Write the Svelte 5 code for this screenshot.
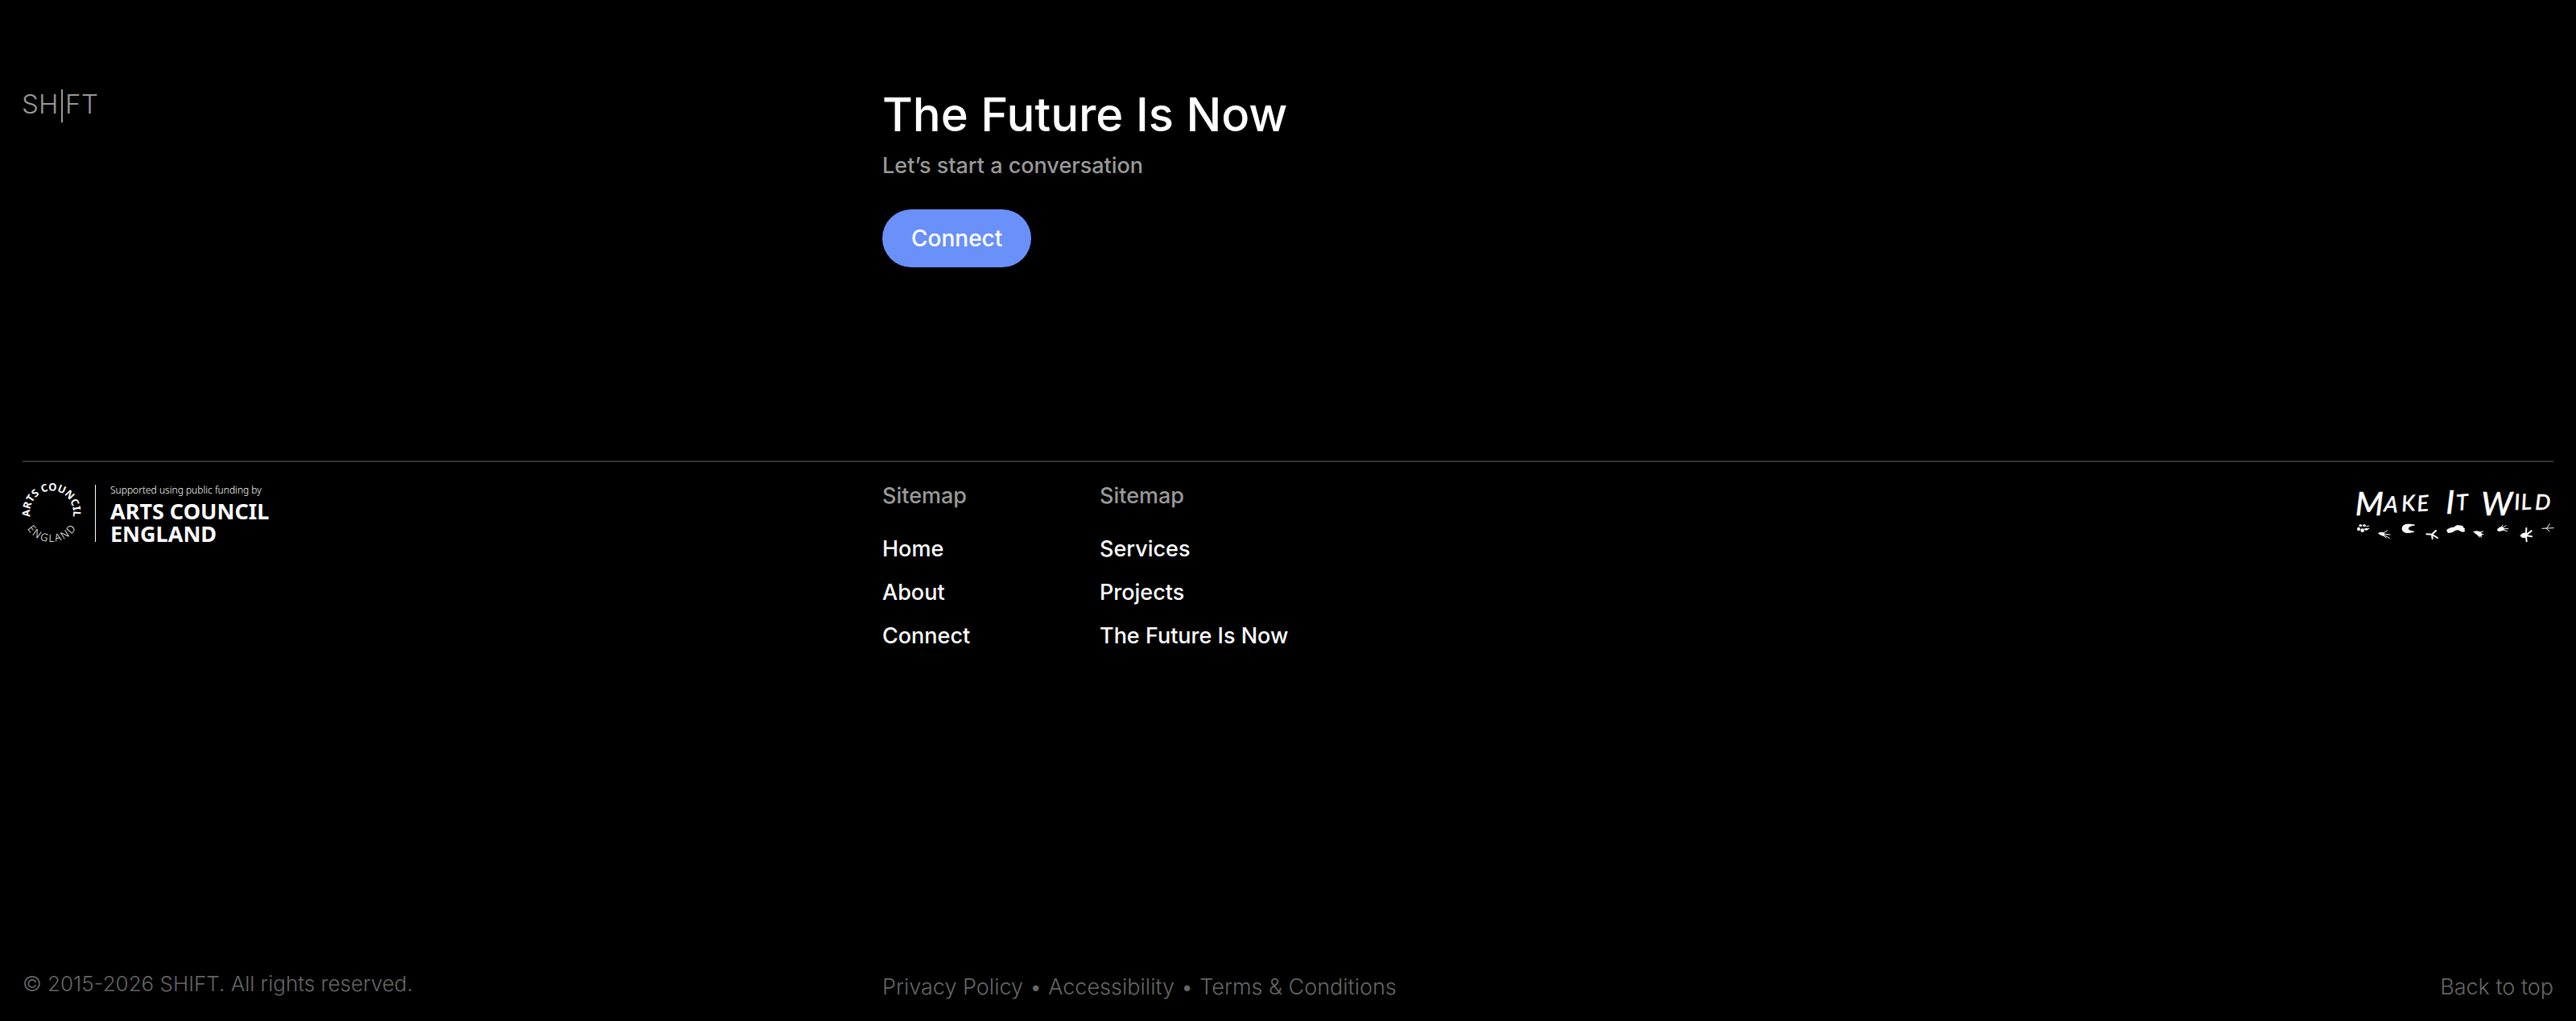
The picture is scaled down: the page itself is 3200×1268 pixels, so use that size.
<script>
  const sitemap = [
    { title: 'Sitemap', links: ['Home', 'About', 'Connect'] },
    { title: 'Sitemap', links: ['Services', 'Projects', 'The Future Is Now'] },
  ]
  const legal = ['Privacy Policy', 'Accessibility', 'Terms & Conditions']
</script>

<footer class="footer" id="top">
  <!-- Call to action -->
  <div class="grid intro">
    <a class="brand" href="#top" aria-label="SHIFT">
      <svg width="96" height="44" viewBox="0 0 96 44">
        <text x="-1 20 53 73" y="33">SHFT</text>
        <rect x="48" y="3" width="2" height="41" />
      </svg>
    </a>
    <div>
      <h2>The Future Is Now</h2>
      <p class="lead">Let’s start a conversation</p>
      <a class="connect" href="#connect">Connect</a>
    </div>
  </div>

  <!-- Partners and sitemap -->
  <div class="grid links">
    <svg class="arts" width="310" height="78" viewBox="0 -2 310 78" role="img" aria-label="Arts Council England">
      <path id="ring-top" d="M9.8 43 A27 27 0 1 1 62.2 43" fill="none" />
      <path id="ring-bottom" d="M0 37 A36 36 0 0 0 72 37" fill="none" />
      <text class="ring bold" text-anchor="middle"><textPath href="#ring-top" startOffset="50%">ARTS COUNCIL</textPath></text>
      <text class="ring" text-anchor="middle" dx="0 2 2 2 2 2 2"><textPath href="#ring-bottom" startOffset="50%">ENGLAND</textPath></text>
      <rect x="90" y="2" width="1" height="71" />
      <text class="support" x="109" y="13">Supported using public funding by</text>
      <text class="council" x="109" y="45">ARTS COUNCIL</text>
      <text class="council" x="109" y="73">ENGLAND</text>
    </svg>

    <nav class="sitemap" aria-label="Sitemap">
      {#each sitemap as column}
        <div>
          <h3>{column.title}</h3>
          <ul>
            {#each column.links as link}
              <li><a href="#top">{link}</a></li>
            {/each}
          </ul>
        </div>
      {/each}
    </nav>

    <svg class="wild" width="244" height="76" viewBox="81 114 732 228" role="img" aria-label="Make It Wild">
      <text class="hand" y="226">
        <tspan class="big" x="74" y="240">M</tspan><tspan x="180 248 306" y="226" rotate="4 -4 -4">AKE</tspan>
        <tspan class="big" x="412" y="234">I</tspan><tspan x="452" y="222" rotate="-4">T</tspan>
        <tspan class="big" x="544" y="240">W</tspan><tspan x="668 694 744" y="220" rotate="-4 -4 0">ILD</tspan>
      </text>
      <!-- paw -->
      <g>
        <ellipse cx="87" cy="291" rx="6" ry="7" />
        <ellipse cx="94" cy="278" rx="6" ry="4" />
        <ellipse cx="108" cy="278" rx="6" ry="4" />
        <ellipse cx="101" cy="296" rx="7" ry="7" />
        <ellipse cx="115" cy="292" rx="7" ry="4" />
        <path d="M116 281l9-2M118 291l8-2" />
      </g>
      <!-- small hand -->
      <g>
        <path d="M162 306q12-6 20 2l-2 8q-10-2-18-8z" />
        <path d="M178 306l16-9M180 309l24 3M180 312l22 13M178 314l12 10" />
      </g>
      <!-- hoof -->
      <path d="M294 276q-44-10-45 14q2 22 45 11q-22-3-23-12q1-9 23-13z" />
      <!-- bird -->
      <path class="line" d="M340 310l20 1 15-14M360 311l21 13M360 312l2 15" />
      <!-- boot -->
      <g>
        <path d="M418 293q12-8 24-8q10-10 24-6q14 4 16 20q-8 4-16-1q-7-8-18-3q-14 11-28 9q-6-4-2-11z" />
        <path d="M468 279l8 3M474 286l8 4" />
      </g>
      <!-- squirrel -->
      <g>
        <path d="M516 301q12-4 26 2l4 12q-10 6-16-2z" />
        <path d="M540 303l11-3M543 309l9 2M538 315l8 7M534 316l4 6" />
      </g>
      <!-- badger -->
      <g>
        <path d="M605 291q6-8 18-7l6 8q-8 8-22 6z" />
        <path d="M618 286l6-10M624 286l12-8M626 290l18 0M624 294l16 5" />
      </g>
      <!-- otter -->
      <g>
        <path d="M690 315q6-10 20-9l6 10q-8 10-20 6z" />
        <path class="line" d="M711 309l1-21M714 311l17-13M714 316l18 3M711 320l2 17" />
      </g>
      <!-- wader -->
      <path class="thin" d="M771 289l42-2M788 288l11-16M786 289l12 11" />
    </svg>
  </div>

  <!-- Legal -->
  <div class="grid legal">
    <p>© 2015-2026 SHIFT. All rights reserved.</p>
    <ul class="policies">
      {#each legal as item}
        <li><a href="#top">{item}</a></li>
      {/each}
    </ul>
    <a class="back" href="#top">Back to top</a>
  </div>
</footer>

<style>
  :global(body) {
    background: #000;
  }

  .footer {
    box-sizing: border-box;
    min-height: 100vh;
    display: flex;
    flex-direction: column;
    padding: 108px 28px 24px;
    background: #000;
    color: #fff;
    font-family: Inter, 'Liberation Sans', sans-serif;
    font-size: 27px;
    font-weight: 500;
    line-height: 36px;
  }
  .grid {
    display: grid;
    grid-template-columns: repeat(3, minmax(0, 1fr));
    column-gap: 60px;
  }
  h2, h3, p, ul { margin: 0; padding: 0; }
  ul { list-style: none; }
  a { color: inherit; text-decoration: none; }
  svg { display: block; fill: #fff; overflow: visible; }

  .intro { padding-bottom: 240px; }
  .brand { justify-self: start; }
  .brand svg { fill: #999; }
  .brand text { font-size: 33px; font-weight: 300; }
  h2 {
    font-size: 58px;
    font-weight: 500;
    line-height: 68px;
  }
  .lead {
    padding: 12px 0 36px;
    color: #999;
  }
  .connect {
    display: inline-block;
    padding: 18px 36px;
    border-radius: 36px;
    background: #6a90f9;
    font-size: 28px;
  }

  .links {
    padding-top: 24px;
    border-top: 2px solid #333;
  }
  .arts text { font-family: 'Noto Sans', 'Open Sans', sans-serif; }
  .arts .ring { font-size: 13px; font-weight: 300; }
  .arts .bold { font-weight: 700; }
  .arts .support { font-size: 12px; font-weight: 300; }
  .arts .council { font-size: 27px; font-weight: 700; }

  .sitemap {
    display: grid;
    grid-template-columns: repeat(4, minmax(0, 1fr));
    column-gap: 72px;
    white-space: nowrap;
  }
  h3 {
    padding-bottom: 30px;
    color: #999;
    font-size: 27px;
    font-weight: 500;
  }
  .sitemap ul { display: grid; gap: 18px; }

  .wild { justify-self: end; stroke: #fff; stroke-linecap: round; stroke-linejoin: round; }
  .wild path { stroke-width: 3; }
  .wild ellipse { stroke: none; }
  .wild .line { fill: none; stroke-width: 6; }
  .wild .thin { fill: none; stroke-width: 3; }
  .wild .hand { font-family: Lato, sans-serif; font-size: 82px; font-style: italic; stroke-width: 1; }
  .wild .big { font-size: 122px; }

  .legal {
    margin-top: auto;
    align-items: end;
    color: #666;
    font-weight: 300;
  }
  .legal p { padding-bottom: 4px; font-size: 26px; }
  .policies { display: flex; }
  .policies li + li::before { content: '•'; padding: 0 8px; }
  .back { justify-self: end; }
</style>
